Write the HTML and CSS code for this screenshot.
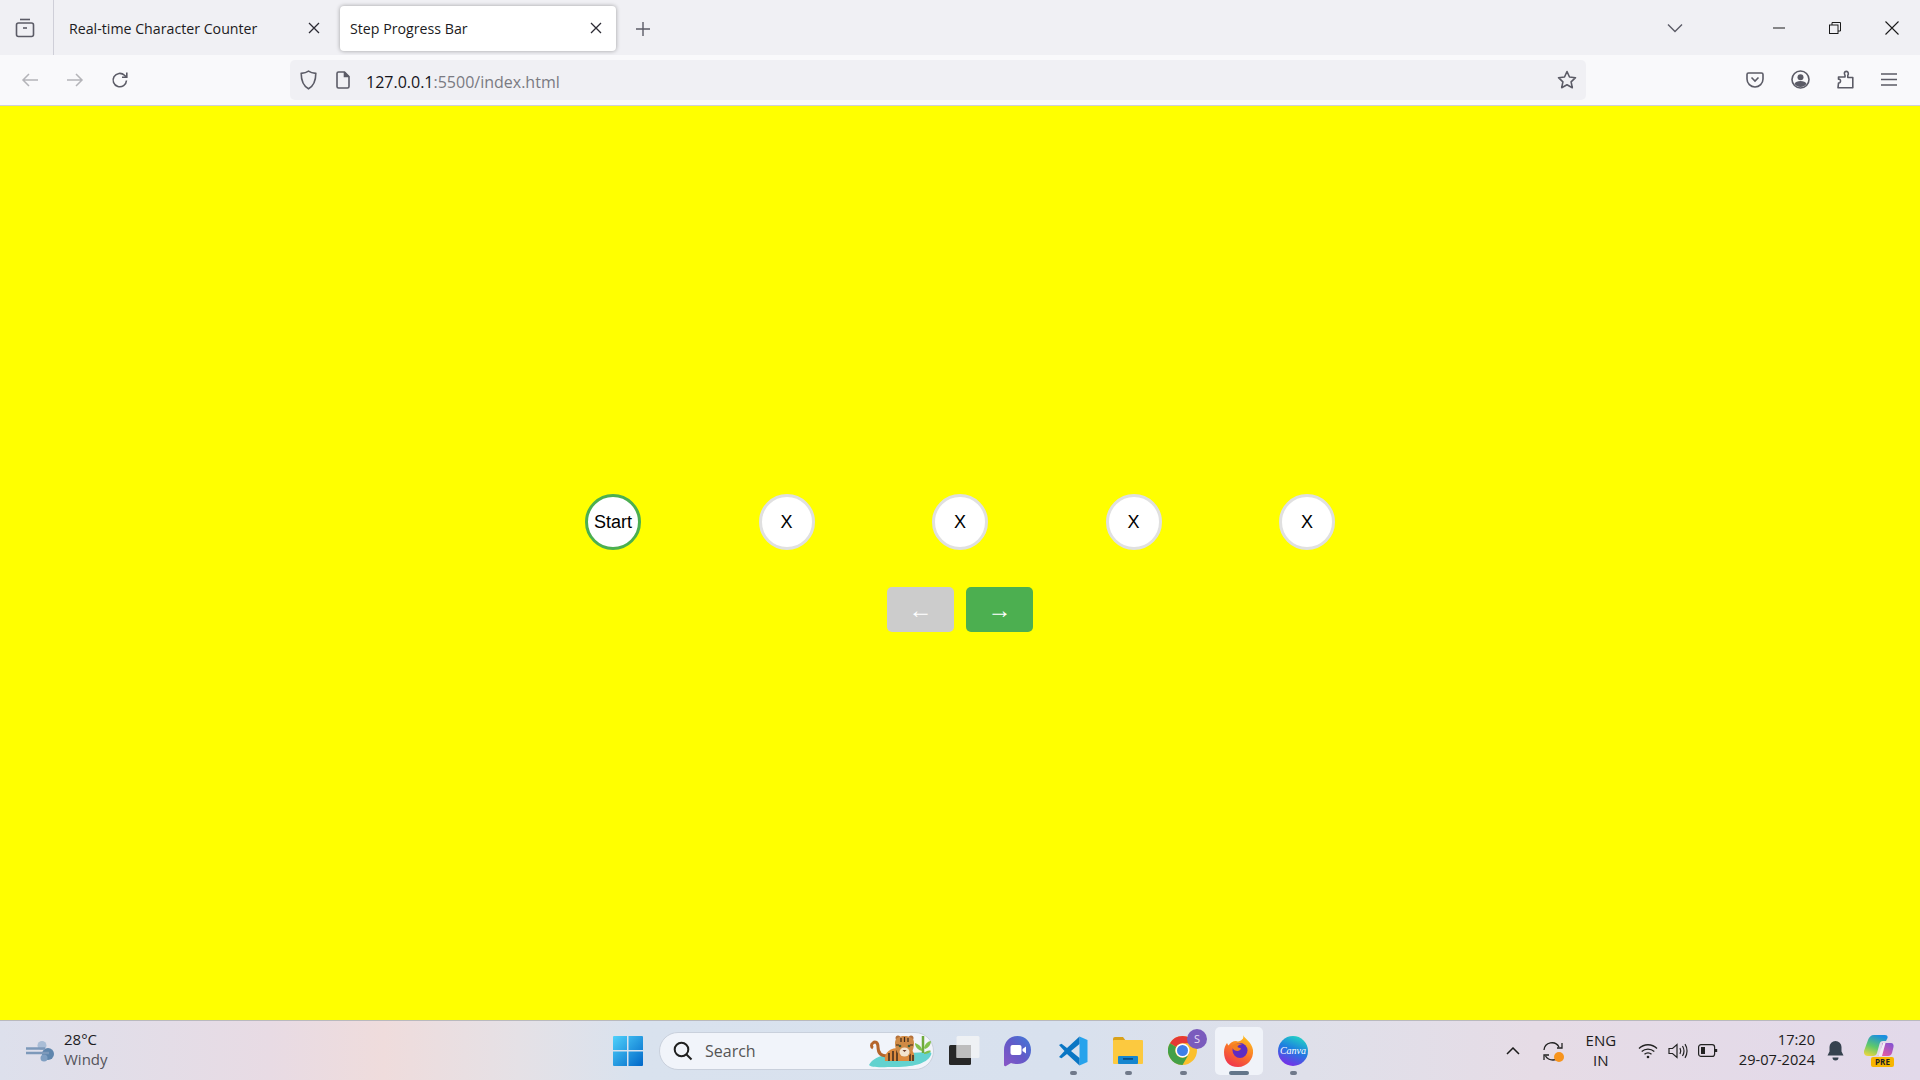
FILE: index.html
```html
<!DOCTYPE html>
<html lang="en">
<head>
    <meta charset="UTF-8">
    <meta name="viewport" content="width=device-width, initial-scale=1.0">
    <title>Step Progress Bar</title>
    <link rel="stylesheet" href="styles.css">
</head>
<body>
    <!-- Browser tab strip -->
    <div class="tabbar">
        <div class="tab-view">
            <svg width="20" height="20" viewBox="0 0 20 20" fill="none" stroke="#5b5b66" stroke-width="1.6"><path d="M5 1.5h10"/><rect x="1.5" y="5" width="17" height="13.5" rx="2"/><path d="M8 10h4"/></svg>
        </div>
        <div class="tab">
            <span class="tab-title">Real-time Character Counter</span>
            <svg class="tab-close" width="12" height="12" viewBox="0 0 12 12" stroke="#2b2a33" stroke-width="1.3"><path d="M1 1l10 10M11 1L1 11"/></svg>
        </div>
        <div class="tab tab-active">
            <span class="tab-title">Step Progress Bar</span>
            <svg class="tab-close" width="12" height="12" viewBox="0 0 12 12" stroke="#2b2a33" stroke-width="1.3"><path d="M1 1l10 10M11 1L1 11"/></svg>
        </div>
        <svg class="tab-new" width="16" height="16" viewBox="0 0 16 16" stroke="#5b5b66" stroke-width="1.4"><path d="M8 1v14M1 8h14"/></svg>
        <div class="window-controls">
            <svg class="tab-list" width="16" height="10" viewBox="0 0 16 10" fill="none" stroke="#5b5b66" stroke-width="1.4"><path d="M1 1.5l7 7 7-7"/></svg>
            <svg width="12" height="2" viewBox="0 0 12 2" stroke="#1a1a1a" stroke-width="1"><path d="M0 1h12"/></svg>
            <svg width="12" height="12" viewBox="0 0 12 12" fill="none" stroke="#1a1a1a" stroke-width="1"><rect x=".5" y="3" width="8.5" height="8.5"/><path d="M3 3V.5h8.5V9H9"/></svg>
            <svg width="14" height="14" viewBox="0 0 14 14" stroke="#1a1a1a" stroke-width="1.1"><path d="M.5.5l13 13M13.5.5l-13 13"/></svg>
        </div>
    </div>

    <!-- Navigation toolbar -->
    <div class="toolbar">
        <div class="nav-buttons">
            <svg width="18" height="16" viewBox="0 0 18 16" fill="none" stroke="#b4b4b9" stroke-width="1.5"><path d="M17 8H2M8 2L2 8l6 6"/></svg>
            <svg width="18" height="16" viewBox="0 0 18 16" fill="none" stroke="#b4b4b9" stroke-width="1.5"><path d="M1 8h15M10 2l6 6-6 6"/></svg>
            <svg width="18" height="18" viewBox="0 0 18 18" fill="none" stroke="#5b5b66" stroke-width="1.6"><path d="M15.5 9.5a6.7 6.7 0 1 1-2-5.2L15.5 6"/><path d="M15.8 1.5V6.2H11"/></svg>
        </div>
        <div class="urlbar">
            <svg width="17" height="20" viewBox="0 0 17 20" fill="none" stroke="#5b5b66" stroke-width="1.6"><path d="M8.5 1.2C6.5 2.6 4 3.2 1.2 3.4c0 6.8 1.5 12 7.3 15.4C14.3 15.4 15.8 10.2 15.8 3.4 13 3.2 10.5 2.6 8.5 1.2z"/></svg>
            <svg class="page-icon" width="14" height="18" viewBox="0 0 14 18" fill="none" stroke="#5b5b66" stroke-width="1.6"><path d="M2.5 1h6L13 5.5v10a1.500 1.500 0 0 1-1.500 1.500h-9A1.500 1.500 0 0 1 1 15.500v-13A1.500 1.500 0 0 1 2.500 1z"/><path d="M8.500 1v4.500H13" fill="#5b5b66"/></svg>
            <span class="url"><span class="url-host">127.0.0.1</span>:5500/index.html</span>
            <svg class="star" width="20" height="20" viewBox="0 0 20 20" fill="none" stroke="#5b5b66" stroke-width="1.6" stroke-linejoin="round"><path d="M10 1.500l2.500 5.500 6 .7-4.400 4.100 1.200 5.900L10 14.800l-5.300 2.900 1.200-5.900L1.500 7.700l6-.7z"/></svg>
        </div>
        <div class="tool-buttons">
            <svg width="18" height="16" viewBox="0 0 18 16" fill="none" stroke="#5b5b66" stroke-width="1.6"><path d="M2.500 1h13A1.500 1.500 0 0 1 17 2.500V7a8 8 0 0 1-16 0V2.500A1.500 1.500 0 0 1 2.500 1z"/><path d="M5.500 5.500L9 9l3.500-3.500"/></svg>
            <svg width="19" height="19" viewBox="0 0 19 19" fill="none" stroke="#5b5b66" stroke-width="1.6"><circle cx="9.500" cy="9.500" r="8.500"/><circle cx="9.500" cy="7.200" r="3" fill="#5b5b66" stroke="none"/><path d="M3.500 14c1-2.300 3-3 6-3s5 .7 6 3c-1.500 1.800-3.600 3-6 3s-4.500-1.200-6-3z" fill="#5b5b66" stroke="none"/></svg>
            <svg width="17" height="19" viewBox="0 0 17 19" fill="none" stroke="#5b5b66" stroke-width="1.600" stroke-linejoin="round"><path d="M1 17.800h14.800V7.500h-5V5.200c1-1 .7-3.800-1.500-3.800S7 3.800 8 5.200V7H1.500v2.200c2.700-.7 2.700 4.400 0 3.800z"/></svg>
            <svg width="16" height="13" viewBox="0 0 16 13" stroke="#5b5b66" stroke-width="1.500"><path d="M0 1h16M0 6.500h16M0 12h16"/></svg>
        </div>
    </div>

    <!-- Page content -->
    <main class="page">
        <div class="steps">
            <div class="step step-active">Start</div>
            <div class="step">X</div>
            <div class="step">X</div>
            <div class="step">X</div>
            <div class="step">X</div>
        </div>
        <div class="controls">
            <button class="control" disabled>&#8592;</button>
            <button class="control control-next">&#8594;</button>
        </div>
    </main>

    <!-- Windows taskbar -->
    <footer class="taskbar">
        <div class="weather">
            <svg width="30" height="22" viewBox="0 0 30 22"><circle cx="17" cy="5.500" r="4.500" fill="#a9bdd6"/><circle cx="23" cy="14" r="6" fill="#5f86ad"/><circle cx="19" cy="18" r="3.500" fill="#7f9fc2"/><path d="M1 8.500h19M1 13h23" stroke="#7d99ba" stroke-width="2.600" fill="none"/></svg>
            <div class="weather-text">
                <div class="weather-temp">28°C</div>
                <div class="weather-desc">Windy</div>
            </div>
        </div>

        <div class="task-icons">
            <svg class="win-logo" width="30" height="30" viewBox="0 0 30 30"><defs><linearGradient id="winGrad" x1="0" y1="0" x2="1" y2="1"><stop offset="0" stop-color="#4fd1fb"/><stop offset="1" stop-color="#0067c8"/></linearGradient></defs><path d="M0 1a1 1 0 0 1 1-1h13v14H0zM15.500 0H29a1 1 0 0 1 1 1v13H15.500zM0 15.500h14V30H1a1 1 0 0 1-1-1zM15.500 15.500H30V29a1 1 0 0 1-1 1H15.500z" fill="url(#winGrad)"/></svg>
            <div class="search">
                <svg width="20" height="20" viewBox="0 0 20 20" fill="none" stroke="#1f1f1f" stroke-width="2"><circle cx="8.500" cy="8.500" r="6.800"/><path d="M13.500 13.500L18.500 18.500"/></svg>
                <span class="search-text">Search</span>
                <svg class="tiger" width="66" height="34" viewBox="0 0 66 34">
                    <path d="M2 31c3-6 10-9 20-11l40-2c2 0 3 1 2 3-3 7-14 12-36 12-12 0-24 1-26-2z" fill="#62d2cf"/>
                    <path d="M20 22c-6 0-9-3-9-9 0-5-3-6-5-4-2 1-2 4 0 5" fill="none" stroke="#b5652c" stroke-width="3"/>
                    <path d="M18 27c-1-6 2-12 12-13h10c7 1 8 7 7 13z" fill="#dd8b3f"/>
                    <path d="M22 19v8M26 17v10M30 16v11M43 18v9M46 21v6" stroke="#3d2a1c" stroke-width="1.500"/>
                    <circle cx="31" cy="4" r="2.500" fill="#b4713a"/><circle cx="44" cy="4" r="2.500" fill="#b4713a"/>
                    <path d="M28 9c0-5 4-7 9.500-7S47 4 47 9c0 8-4 14-9.500 14S28 17 28 9z" fill="#cf8a45"/>
                    <ellipse cx="37.500" cy="18" rx="5" ry="4.500" fill="#f2e3cf"/>
                    <path d="M34 4v4M37.500 3v5M41 4v4M29 11h3M43 11h3" stroke="#3d2a1c" stroke-width="1.200"/>
                    <circle cx="33" cy="12" r="1.300" fill="#3c5a3a"/><circle cx="42" cy="12" r="1.300" fill="#3c5a3a"/>
                    <path d="M35.500 16h4l-2 2z" fill="#6b3a2a"/>
                    <path d="M56 19V2" stroke="#6eaa3c" stroke-width="2.500"/>
                    <path d="M55 17c-4-1-7-4-7-8 3 1 6 3 7 6zM57 14c1-4 4-7 7-7 0 4-3 7-6 8zM57 19c2-2 5-3 7-2-1 2-4 3-7 3z" fill="#82c04d"/>
                </svg>
            </div>

            <div class="task-item task-view">
                <svg width="31" height="29" viewBox="0 0 31 29"><rect x="0" y="9" width="22" height="20" rx="1.500" fill="#272727"/><rect x="7.500" y="0" width="23" height="22" rx="1.500" fill="#f6f6f6" opacity=".75"/><rect x="7.500" y="9" width="14.500" height="13" fill="#bdbdbd"/></svg>
            </div>
            <div class="task-item">
                <svg width="29" height="32" viewBox="0 0 29 32"><defs><linearGradient id="meetGrad" x1="1" y1="0" x2="0" y2="1"><stop offset="0" stop-color="#3f7bd8"/><stop offset=".5" stop-color="#6259c8"/><stop offset="1" stop-color="#8a56c6"/></linearGradient></defs><path d="M14.500 1C6.500 1 1 7 1 15v15c0 1 1 1.500 2 1l5-3c2 .7 4 1 6.500 1C22.500 29 28 23 28 15S22.500 1 14.500 1z" fill="url(#meetGrad)"/><rect x="7.500" y="10" width="11" height="10" rx="2" fill="#fff"/><path d="M19.500 14l3.500-2.500v7L19.500 16z" fill="#fff"/></svg>
            </div>
            <div class="task-item task-running">
                <svg width="30" height="30" viewBox="0 0 30 30"><path d="M21.500.5L29.500 4v22l-8 3.500z" fill="#27a3ec"/><path d="M21.500.5L9 12 3.500 7.800 1 9l5.500 6L1 21l2.500 1.200L9 18l12.500 11.500V22L13 15l8.500-7z" fill="#0a76c4"/></svg>
            </div>
            <div class="task-item task-running">
                <svg width="30" height="27" viewBox="0 0 30 27"><path d="M0 2a2 2 0 0 1 2-2h8l3 4H0z" fill="#d9a11a"/><rect x="0" y="3" width="30" height="24" rx="1" fill="#fcc93f"/><rect x="5" y="19" width="20" height="8" rx="1" fill="#1686cf"/><rect x="10" y="21" width="10" height="1.800" fill="#0b4f86"/></svg>
            </div>
            <div class="task-item task-running chrome-item">
                <svg width="29" height="29" viewBox="0 0 29 29"><circle cx="14.500" cy="14.500" r="14.500" fill="#fbc02d"/><path d="M14.500 0A14.500 14.500 0 0 1 27.060 7.250H14.500a7.250 7.250 0 0 0-6.280 3.630L1.940 7.250A14.500 14.500 0 0 1 14.500 0z" fill="#e53935"/><path d="M1.940 7.250A14.500 14.500 0 0 0 14.500 29l6.280-10.870a7.250 7.250 0 0 1-12.560-7.250z" fill="#43a047"/><circle cx="14.500" cy="14.500" r="7" fill="#fff"/><circle cx="14.500" cy="14.500" r="5.500" fill="#3f7fe8"/></svg>
                <span class="profile-badge">S</span>
            </div>
            <div class="task-item task-firefox">
                <svg width="30" height="32" viewBox="0 0 30 32"><defs><linearGradient id="foxGrad" x1=".7" y1="0" x2=".2" y2="1"><stop offset="0" stop-color="#ffc21f"/><stop offset=".5" stop-color="#f9722a"/><stop offset="1" stop-color="#ef2f50"/></linearGradient></defs><path d="M19 0c1 3 9 7 10 15 1 9-6 17-15 17S0 26 0 17C0 13 1.500 10 3 8c.5 1 1 2 1.500 2.500C6 8 9 6 12 6c2 1 5 0 6-1.500C19.500 3.500 19.500 2 19 0z" fill="url(#foxGrad)"/><circle cx="16" cy="15.500" r="7.500" fill="#5e2cc2"/><path d="M8 11c3-3 7-3.500 10-1.500-2.500-.3-4 .7-4.500 2.300 0 .7 2.500 1.200 3.500 1.700-.5 2-3 3-6 2-1.500-.7-3-2.500-3-4.500z" fill="#f47f20"/></svg>
            </div>
            <div class="task-item task-running">
                <svg width="30" height="30" viewBox="0 0 30 30"><defs><linearGradient id="canvaGrad" x1=".3" y1="1" x2=".7" y2="0"><stop offset="0" stop-color="#7d2ae8"/><stop offset=".55" stop-color="#1d7fe0"/><stop offset="1" stop-color="#22d3c5"/></linearGradient></defs><circle cx="15" cy="15" r="15" fill="url(#canvaGrad)"/><text x="15" y="18" text-anchor="middle" class="canva-text">Canva</text></svg>
            </div>
        </div>

        <div class="tray">
            <svg class="tray-chevron" width="14" height="8" viewBox="0 0 14 8" fill="none" stroke="#1c1c1c" stroke-width="1.500"><path d="M1 7l6-6 6 6"/></svg>
            <div class="tray-sync">
                <svg width="20" height="20" viewBox="0 0 20 20" fill="none" stroke="#222" stroke-width="1.300"><path d="M1 9a8 8 0 0 1 15-3M19 2v5h-5"/><path d="M18 13c-1.500 3.500-4.500 6-8 6s-6-1.500-7.500-4M1 19v-5h5"/></svg>
                <span class="sync-dot"></span>
            </div>
            <div class="tray-lang">ENG<br>IN</div>
            <div class="tray-status">
                <svg width="20" height="16" viewBox="0 0 20 16" fill="none" stroke="#222" stroke-width="1.300"><path d="M1 5.500c5-5 13-5 18 0M3.700 8.500c3.500-3.300 9-3.300 12.600 0M6.500 11.300c2-1.800 5-1.800 7 0"/><circle cx="10" cy="14" r="1.300" fill="#222" stroke="none"/></svg>
                <svg width="20" height="16" viewBox="0 0 20 16" fill="none" stroke="#222" stroke-width="1.200"><path d="M1 5.500h3.500L9 1.500v13l-4.500-4H1z"/><path d="M12 5c1 2 1 4 0 6M14.500 3c1.800 3 1.800 7 0 10M17 1.200c2.700 4 2.700 9.600 0 13.600"/></svg>
                <svg width="20" height="13" viewBox="0 0 20 13" fill="none" stroke="#222" stroke-width="1.200"><rect x=".6" y=".6" width="16" height="11.800" rx="2.500"/><rect x="3" y="3" width="4" height="7" fill="#222" stroke="none"/><path d="M18 5v3" stroke-width="2.400"/></svg>
            </div>
            <div class="tray-clock">
                <div>17:20</div>
                <div>29-07-2024</div>
            </div>
            <svg class="tray-bell" width="17" height="20" viewBox="0 0 17 20"><path d="M8.500 0a6 6 0 0 1 6 6v4.500l2 4H.5l2-4V6a6 6 0 0 1 6-6z" fill="#36424f"/><path d="M5.500 16.500h6a3 3 0 0 1-6 0z" fill="#36424f"/></svg>
            <div class="copilot">
                <svg width="30" height="23" viewBox="0 0 30 23"><defs><linearGradient id="copA" x1=".2" y1="1" x2=".6" y2="0"><stop offset="0" stop-color="#e8d640"/><stop offset=".45" stop-color="#5fc96a"/><stop offset="1" stop-color="#1a8fe0"/></linearGradient><linearGradient id="copB" x1="1" y1="0" x2=".2" y2="1"><stop offset="0" stop-color="#7b52d6"/><stop offset="1" stop-color="#f05ca0"/></linearGradient></defs><path d="M10 0h11c2 0 3 1 2.500 3L22 6h-3c-2 0-3 1-3.500 3L13 18c-.5 2-2 3-4 3H4c-3 0-4.500-2-4-5L4 5C5 2 7 0 10 0z" fill="url(#copA)"/><path d="M18.500 8H27c2 0 3 2 2.500 4l-1.500 6c-.7 2-2 3-4 3H13c2 0 3-1 3.500-3z" fill="url(#copB)"/><path d="M19 8h2.500L18 21h-3.500z" fill="#f3eef6"/></svg>
                <span class="pre-badge">PRE</span>
            </div>
        </div>
    </footer>
</body>
</html>
```

FILE: styles.css
```css
* {
    box-sizing: border-box;
}

html, body {
    height: 100%;
}

body {
    margin: 0;
    display: flex;
    flex-direction: column;
    height: 100vh;
    overflow: hidden;
    font-family: 'Open Sans', 'Noto Sans', sans-serif;
    color: #1c1b22;
}

/* tab strip */
.tabbar {
    display: flex;
    align-items: center;
    height: 55px;
    background-color: #f0f0f4;
    flex-shrink: 0;
}

.tab-view {
    display: flex;
    align-items: center;
    justify-content: center;
    width: 54px;
    height: 55px;
    padding-right: 4px;
    border-right: 1px solid #cfcfd8;
}

.tab {
    display: flex;
    align-items: center;
    justify-content: space-between;
    width: 276px;
    height: 45px;
    margin-top: 1px;
    padding: 0 10px 0 15px;
    font-size: 14.2px;
}

.tab-active {
    margin-left: 10px;
    padding: 0 14px 0 10px;
    background-color: #fff;
    border-radius: 4px;
    box-shadow: 0 0 4px rgba(0, 0, 0, 0.35);
}

.tab-new {
    margin-left: 19px;
    margin-top: 3px;
}

.window-controls {
    display: flex;
    align-items: center;
    margin-left: auto;
    padding-right: 21px;
}

.window-controls svg {
    margin-left: 44px;
}

.window-controls .tab-list {
    margin-right: 46px;
}

/* toolbar */
.toolbar {
    display: flex;
    align-items: center;
    height: 51px;
    padding-bottom: 1px;
    background-color: #f9f9fb;
    border-bottom: 1px solid #cfcfd8;
    flex-shrink: 0;
}

.nav-buttons {
    display: flex;
    align-items: center;
    gap: 27px;
    width: 290px;
    padding-left: 21px;
}

.urlbar {
    display: flex;
    align-items: center;
    width: 1296px;
    height: 40px;
    padding: 0 9px 0 10px;
    background-color: #f0f0f4;
    border-radius: 5px;
}

.page-icon {
    margin-left: 19px;
}

.url {
    margin-left: 16px;
    padding-top: 4px;
    font-size: 16px;
    color: #7a7a82;
}

.url-host {
    color: #15141a;
}

.star {
    margin-left: auto;
}

.tool-buttons {
    display: flex;
    align-items: center;
    gap: 27px;
    padding-left: 160px;
}

/* page */
.page {
    flex: 1;
    display: flex;
    flex-direction: column;
    align-items: center;
    justify-content: center;
    gap: 37px;
    background-color: #ffff00;
    font-family: 'Liberation Sans', Arial, sans-serif;
}

.steps {
    display: flex;
    justify-content: space-between;
    width: 750px;
}

.step {
    display: flex;
    align-items: center;
    justify-content: center;
    width: 56px;
    height: 56px;
    background-color: #fff;
    border: 3px solid #e0e0e0;
    border-radius: 50%;
    font-size: 18px;
    color: #000;
}

.step-active {
    border-color: #4caf50;
}

.controls {
    display: flex;
    gap: 12px;
}

.control {
    width: 67px;
    height: 45px;
    padding: 0;
    border: none;
    border-radius: 5px;
    background-color: #ccc;
    color: #fff;
    font-family: 'Liberation Sans', Arial, sans-serif;
    font-size: 24px;
    line-height: 1;
}

.control-next {
    background-color: #4caf50;
}

/* taskbar */
.taskbar {
    display: grid;
    grid-template-columns: 1fr auto 1fr;
    align-items: center;
    height: 60px;
    background: linear-gradient(90deg, #dde0ec 0%, #e8dbe4 14%, #efdcdc 20%, #e5e1e6 27%, #d9e2ee 33%, #d8e1ee 55%, #dfe0ea 68%, #e6dce6 80%, #e2d9ea 100%);
    border-top: 1px solid #b9b9bd;
    flex-shrink: 0;
}

.weather {
    display: flex;
    align-items: center;
    gap: 9px;
    padding-left: 25px;
}

.weather-text {
    margin-bottom: 4px;
    font-size: 15px;
    line-height: 20px;
}

.weather-desc {
    color: #54545a;
}

.task-icons {
    display: flex;
    align-items: center;
    padding-left: 13px;
}

.search {
    display: flex;
    align-items: center;
    width: 275px;
    height: 38px;
    margin: 0 1px 0 16px;
    padding-left: 13px;
    background-color: #f1f4fa;
    border: 1px solid #c9d0dc;
    border-radius: 19px;
}

.search-text {
    margin-left: 12px;
    font-size: 16px;
    color: #555;
}

.tiger {
    margin-left: auto;
}

.task-item {
    position: relative;
    display: flex;
    align-items: center;
    justify-content: center;
    width: 55px;
    height: 48px;
}

.task-view {
    padding-left: 4px;
}

.task-running::after {
    content: "";
    position: absolute;
    left: 50%;
    bottom: 0;
    width: 7px;
    height: 4px;
    margin-left: -3px;
    border-radius: 2px;
    background-color: #70798a;
}

.task-firefox {
    width: 48px;
    margin: 0 2px 0 5px;
    background-color: #f0f3f9;
    border-radius: 5px;
}

.task-firefox::after {
    content: "";
    position: absolute;
    left: 50%;
    bottom: 0;
    width: 20px;
    height: 4px;
    margin-left: -10px;
    border-radius: 2px;
    background-color: #64768a;
}

.profile-badge {
    position: absolute;
    top: 2px;
    right: 3px;
    width: 20px;
    height: 20px;
    border-radius: 50%;
    background-color: #7a5bbd;
    color: #e6dcf5;
    font-size: 11px;
    line-height: 20px;
    text-align: center;
}

.canva-text {
    font-family: 'Liberation Serif', serif;
    font-style: italic;
    font-size: 10px;
    fill: #fff;
}

.tray {
    display: flex;
    align-items: center;
    justify-self: end;
    font-size: 14px;
    color: #1c1c1c;
}

.tray-chevron {
    margin-right: 23px;
}

.tray-sync {
    position: relative;
    display: flex;
    margin-right: 18px;
}

.sync-dot {
    position: absolute;
    right: -1px;
    bottom: -1px;
    width: 10px;
    height: 10px;
    border-radius: 50%;
    background-color: #f7941d;
}

.tray-lang {
    width: 40px;
    margin-right: 17px;
    margin-bottom: 2px;
    font-size: 15px;
    line-height: 20px;
    text-align: center;
}

.tray-status {
    display: flex;
    align-items: center;
    gap: 10px;
    margin-right: 21px;
}

.tray-clock {
    margin-bottom: 3px;
    font-size: 14.6px;
    line-height: 20px;
    text-align: right;
}

.tray-bell {
    margin-left: 12px;
    margin-right: 20px;
}

.copilot {
    position: relative;
    display: flex;
    width: 30px;
    height: 32px;
    margin-right: 26px;
}

.pre-badge {
    position: absolute;
    left: 7px;
    bottom: 0;
    width: 23px;
    height: 10px;
    border-radius: 2px;
    background-color: #f7b500;
    color: #222;
    font-size: 8px;
    font-weight: 700;
    line-height: 10px;
    text-align: center;
}
```
